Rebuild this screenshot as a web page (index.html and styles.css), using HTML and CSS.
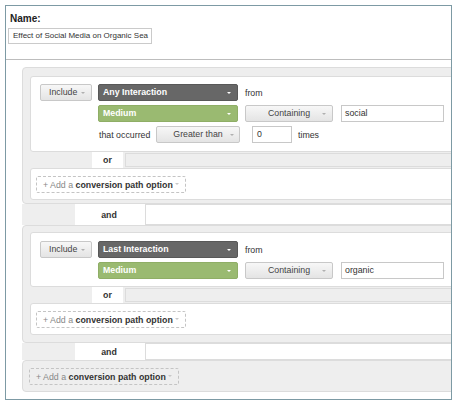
FILE: index.html
```html
<!DOCTYPE html>
<html>
<head>
<meta charset="utf-8">
<link rel="stylesheet" href="styles.css">
</head>
<body>
<div class="frame">
  <div class="name-sec">
    <div class="name-label">Name:</div>
    <div class="name-input">Effect of Social Media on Organic Sea</div>
  </div>
  <div class="rules">
    <div class="panel p1">
      <div class="card rule-card">
        <div class="btn include">Include<span class="caret"></span></div>
        <div class="rows">
          <div class="row">
            <div class="sel dark">Any Interaction<span class="caret w"></span></div>
            <span class="lbl">from</span>
          </div>
          <div class="row">
            <div class="sel green">Medium<span class="caret w"></span></div>
            <div class="btn contain">Containing<span class="caret"></span></div>
            <div class="input val">social</div>
          </div>
          <div class="row">
            <span class="occurred">that occurred</span>
            <div class="btn gt">Greater than<span class="caret"></span></div>
            <div class="input num">0</div>
            <span class="times">times</span>
          </div>
        </div>
      </div>
      <div class="or-row"><div class="or-space"></div><div class="or-cell">or</div><div class="or-rest"></div></div>
      <div class="card add-card"><div class="add">+ Add a&nbsp;<b>conversion path option</b><span class="caret"></span></div></div>
    </div>
    <div class="and-row a1"><div class="and-space"></div><div class="and-cell">and</div><div class="and-rest"></div></div>
    <div class="panel p2">
      <div class="card rule-card r2">
        <div class="btn include">Include<span class="caret"></span></div>
        <div class="rows">
          <div class="row">
            <div class="sel dark">Last Interaction<span class="caret w"></span></div>
            <span class="lbl">from</span>
          </div>
          <div class="row">
            <div class="sel green">Medium<span class="caret w"></span></div>
            <div class="btn contain">Containing<span class="caret"></span></div>
            <div class="input val">organic</div>
          </div>
        </div>
      </div>
      <div class="or-row"><div class="or-space"></div><div class="or-cell">or</div><div class="or-rest"></div></div>
      <div class="card add-card"><div class="add">+ Add a&nbsp;<b>conversion path option</b><span class="caret"></span></div></div>
    </div>
    <div class="and-row a2"><div class="and-space"></div><div class="and-cell">and</div><div class="and-rest"></div></div>
    <div class="panel p3">
      <div class="add plain">+ Add a&nbsp;<b>conversion path option</b><span class="caret"></span></div>
    </div>
  </div>
</div>
</body>
</html>
```
FILE: styles.css
```css
* { box-sizing: border-box; }
body {
  margin: 0;
  font-family: "Liberation Sans", Arial, sans-serif;
  font-size: 8.8px;
  color: #333;
  background: #fff;
}
.frame {
  margin: 5px 0 0 5px;
  width: 447px;
  height: 395px;
  border: 1px solid #7d9aa4;
  overflow: hidden;
}
.name-sec {
  padding: 7px 0 15px 2px;
  border-bottom: 1px solid #bdbdbd;
}
.name-label {
  font-size: 10px;
  font-weight: bold;
  line-height: 12px;
  color: #222;
  margin-left: 2px;
}
.name-input {
  margin-top: 3px;
  width: 144px;
  height: 16px;
  border: 1px solid #cacaca;
  padding-left: 4px;
  font-size: 8px;
  line-height: 14px;
  white-space: nowrap;
  overflow: hidden;
  color: #333;
}
.rules {
  padding: 7px 0 0 16px;
  margin-right: -30px;
}
.panel {
  background: #eeeeee;
  border: 1px solid #dcdcdc;
  border-radius: 4px;
  padding-left: 7px;
}
.p1 { padding-top: 8px; padding-bottom: 3px; }
.p2 { padding-top: 6px; padding-bottom: 7px; }
.p3 { padding-top: 7px; padding-bottom: 6px; padding-left: 6px; }
.card {
  background: #fff;
  border: 1px solid #dcdcdc;
  border-radius: 3px;
}
.rule-card {
  display: flex;
  align-items: flex-start;
  padding: 7px 0 8px 9px;
}
.r2 { padding-top: 8px; padding-bottom: 7px; }
.btn {
  position: relative;
  height: 17px;
  border: 1px solid #c8c8c8;
  border-radius: 2px;
  background: linear-gradient(#f7f7f7, #e4e4e4);
  color: #444;
  line-height: 15px;
  white-space: nowrap;
}
.include { width: 52px; padding-left: 8px; }
.caret {
  position: absolute;
  right: 6px;
  top: 7px;
  width: 0;
  height: 0;
  border-left: 2.5px solid transparent;
  border-right: 2.5px solid transparent;
  border-top: 2.5px solid #b0b0b0;
}
.caret.w { border-top-color: #fff; }
.rows {
  margin-left: 6px;
  display: flex;
  flex-direction: column;
  gap: 4px;
}
.row {
  display: flex;
  align-items: center;
  height: 17px;
}
.sel {
  position: relative;
  width: 140px;
  height: 17px;
  border-radius: 2px;
  color: #fff;
  font-weight: bold;
  padding-left: 4px;
  line-height: 15px;
}
.dark { background: #676767; border: 1px solid #585858; }
.green { background: #9aba71; border: 1px solid #8fae66; }
.lbl { margin-left: 7px; }
.contain { width: 88px; margin-left: 7px; text-align: center; }
.input {
  height: 17px;
  border: 1px solid #c8c8c8;
  background: #fff;
  line-height: 15px;
  color: #333;
}
.val { width: 103px; margin-left: 8px; padding-left: 3px; }
.occurred { width: 57px; margin-left: 1px; }
.gt { width: 84px; text-align: center; }
.gt .caret { right: 5px; }
.num { width: 40px; margin-left: 12px; padding-left: 4px; }
.times { margin-left: 6px; }
.or-row {
  display: flex;
  height: 16px;
}
.or-space { width: 62px; }
.or-cell {
  width: 31px;
  background: #fff;
  text-align: center;
  font-weight: bold;
  line-height: 16px;
  color: #333;
}
.or-rest {
  flex: 1;
  margin: 1px 0 1px 2px;
  border: 1px solid #dcdcdc;
  border-right: 0;
  background: #eee;
}
.add-card { padding: 7px 0 6px 5px; }
.add {
  position: relative;
  display: flex;
  align-items: center;
  width: 150px;
  height: 17px;
  border: 1px dashed #c4c4c4;
  border-radius: 2px;
  padding-left: 6px;
  color: #888;
  white-space: nowrap;
}
.add b { color: #333; }
.add .caret { top: 6px; border-top-color: #c8c8c8; }
.and-row { display: flex; }
.a1 { height: 21px; }
.a2 { height: 17px; }
.and-space { width: 53px; background: #eee; }
.and-cell {
  width: 68px;
  background: #fff;
  text-align: center;
  font-weight: bold;
  color: #333;
  display: flex;
  align-items: center;
  justify-content: center;
}
.and-rest {
  flex: 1;
  margin-left: 2px;
  border: 1px solid #dcdcdc;
  border-right: 0;
  background: #fff;
}
```
